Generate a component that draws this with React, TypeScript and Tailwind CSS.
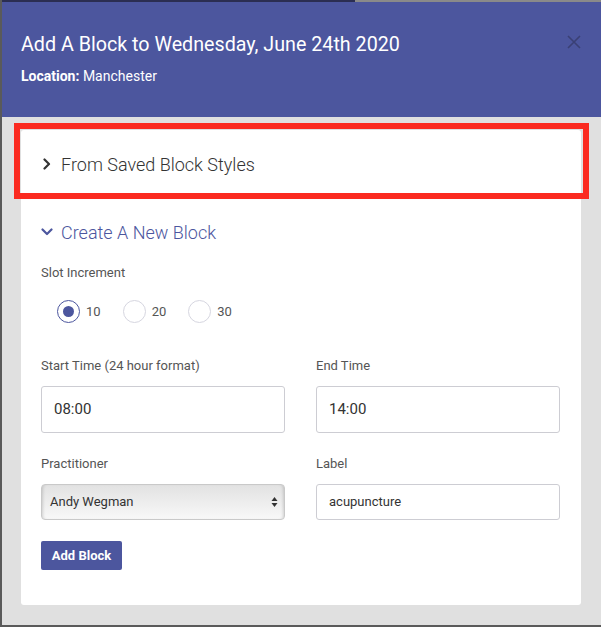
import React from "react";

const F = { fontFamily: "Roboto, 'Open Sans', sans-serif" };

function Chevron({ dir, color }: { dir: "right" | "down"; color: string }) {
  return (
    <svg width="12" height="12" viewBox="0 0 12 12" fill="none">
      {dir === "right" ? (
        <path d="M3.5 1.5 L8 6 L3.5 10.5" stroke={color} strokeWidth="2.2" strokeLinecap="round" strokeLinejoin="round" />
      ) : (
        <path d="M1.5 3.5 L6 8 L10.5 3.5" stroke={color} strokeWidth="2.2" strokeLinecap="round" strokeLinejoin="round" />
      )}
    </svg>
  );
}

function Radio({ label, checked }: { label: string; checked?: boolean }) {
  return (
    <div className="flex items-center gap-[6px]">
      <div
        className={
          checked
            ? "w-[23px] h-[23px] rounded-full border border-[#4c569e] flex items-center justify-center bg-white"
            : "w-[23px] h-[23px] rounded-full border border-[#d6d6e0] bg-white"
        }
      >
        {checked && <div className="w-[11px] h-[11px] rounded-full bg-[#4c569e]" />}
      </div>
      <span className="text-[13px] text-[#555]">{label}</span>
    </div>
  );
}

export default function App() {
  return (
    <div className="w-[601px] h-[627px] overflow-hidden bg-[#e0e0e0] border-l-2 border-b-2 border-[#5a5a5a] relative" style={F}>
      <div className="flex h-[2px]">
        <div className="w-[353px] bg-[#2b2e52]" />
        <div className="flex-1 bg-[#8a8a8a]" />
      </div>
      <div className="h-[115px] bg-[#4c569e] pl-[19px] pr-[20px] pt-[30px] relative">
        <div className="text-[19.7px] leading-[26px] text-white">Add A Block to Wednesday, June 24th 2020</div>
        <div className="mt-[9px] text-[14px] leading-[18px] text-white">
          <span className="font-bold">Location:</span> Manchester
        </div>
        <svg className="absolute right-[20px] top-[33px]" width="14" height="14" viewBox="0 0 14 14">
          <path d="M1 1 L13 13 M13 1 L1 13" stroke="#3a4075" strokeWidth="1.6" />
        </svg>
      </div>

      <div className="pt-[13px] pl-[19px] pr-[20px]">
        <div className="bg-white rounded-[3px] pl-[20px] pr-[21px] pb-[35px]">
          <div className="h-[68px] flex items-center gap-[8px]">
            <Chevron dir="right" color="#333" />
            <span className="text-[18px] text-[#333] font-light">From Saved Block Styles</span>
          </div>

          <div className="mt-[22px] h-6 flex items-center gap-[8px]">
            <Chevron dir="down" color="#4c569e" />
            <span className="text-[18px] text-[#4c569e] font-light">Create A New Block</span>
          </div>

          <div className="mt-[21px] text-[13px] leading-4 text-[#555]">Slot Increment</div>
          <div className="mt-[19px] pl-4 flex items-center gap-[22px]">
            <Radio label="10" checked />
            <Radio label="20" />
            <Radio label="30" />
          </div>

          <div className="grid grid-cols-2 gap-x-[31px] mt-[35px]">
            <div>
              <div className="text-[13px] leading-4 text-[#555]">Start Time (24 hour format)</div>
              <div className="mt-3 h-[47px] border border-[#cdcdd3] rounded-[3px] flex items-center pl-[12px] text-[15px] text-[#333]">08:00</div>
            </div>
            <div>
              <div className="text-[13px] leading-4 text-[#555]">End Time</div>
              <div className="mt-3 h-[47px] border border-[#cdcdd3] rounded-[3px] flex items-center pl-[12px] text-[15px] text-[#333]">14:00</div>
            </div>
          </div>

          <div className="grid grid-cols-2 gap-x-[31px] mt-[23px]">
            <div>
              <div className="text-[13px] leading-4 text-[#555]">Practitioner</div>
              <div className="mt-3 h-[36px] border border-[#c9c9c9] rounded-[4px] bg-gradient-to-b from-[#e2e2e2] to-[#f8f8f8] shadow-[inset_3px_0_3px_-2px_rgba(0,0,0,0.15),inset_-3px_0_3px_-2px_rgba(0,0,0,0.15)] flex items-center justify-between pl-[8px] pr-[6px]">
                <span className="text-[13px] text-[#333]">Andy Wegman</span>
                <svg width="7" height="12" viewBox="0 0 7 12">
                  <path d="M3.5 1 L6.5 5 L0.5 5 Z M0.5 7 L6.5 7 L3.5 11 Z" fill="#333" />
                </svg>
              </div>
            </div>
            <div>
              <div className="text-[13px] leading-4 text-[#555]">Label</div>
              <div className="mt-3 h-[36px] border border-[#cdcdd3] rounded-[3px] flex items-center pl-[12px] text-[13px] text-[#333]">acupuncture</div>
            </div>
          </div>

          <button className="mt-[21px] h-[29px] w-[81px] bg-[#4c569e] rounded-[2px] text-white text-[13px] font-bold">Add Block</button>
        </div>
      </div>

      <div className="absolute left-[12px] top-[123px] w-[575px] h-[76px] border-[6px] border-[#fb2a20] pointer-events-none" />
    </div>
  );
}
